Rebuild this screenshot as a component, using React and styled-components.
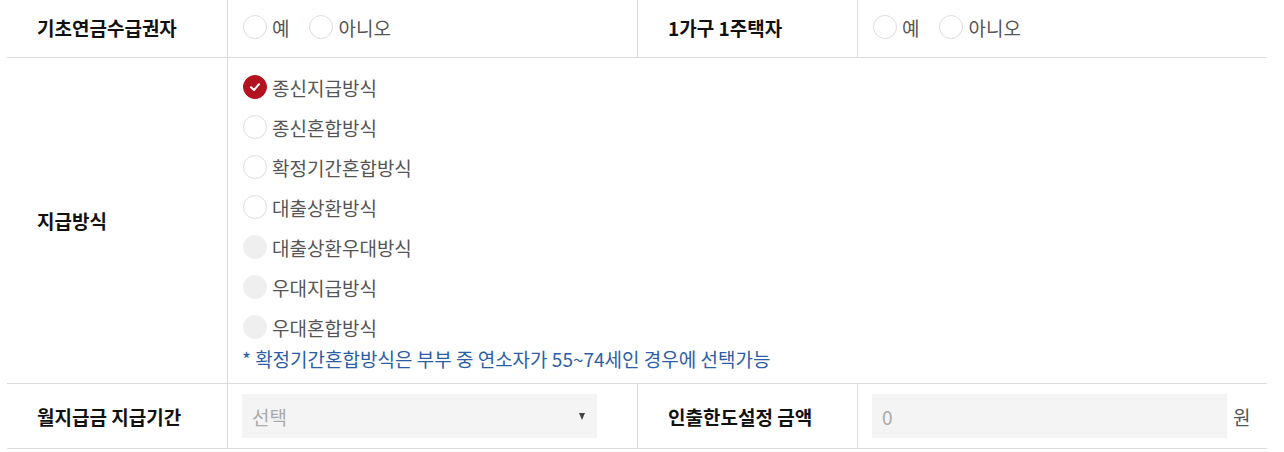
import React from "react";
import styled, { createGlobalStyle } from "styled-components";

const Global = createGlobalStyle`
  html, body { margin: 0; padding: 0; background: #fff; }
  body { font-family: "Noto Sans CJK KR", "Noto Sans", sans-serif; }
`;

const Table = styled.div`
  margin-left: 7px;
  width: 1260px;
  display: grid;
  grid-template-columns: 221px 410px 220px 409px;
`;

const Label = styled.div`
  display: flex;
  align-items: center;
  padding: 0 0 ${(p) => p.$pb || 0}px 30px;
  height: ${(p) => p.$h}px;
  border-right: 1px solid #dcdcdc;
  border-bottom: 1px solid #dcdcdc;
  font-size: 19px;
  font-weight: 700;
  color: #111;
  box-sizing: border-box;
`;

const Cell = styled.div`
  grid-column: ${(p) => p.$span || "auto"};
  display: flex;
  flex-direction: ${(p) => (p.$column ? "column" : "row")};
  align-items: ${(p) => (p.$column ? "flex-start" : "center")};
  padding: ${(p) => p.$pad || "0 14px"};
  height: ${(p) => p.$h}px;
  border-right: ${(p) => (p.$divider ? "1px solid #dcdcdc" : "none")};
  border-bottom: 1px solid #dcdcdc;
  box-sizing: border-box;
`;

const Option = styled.label`
  display: flex;
  align-items: center;
  height: 40px;
  margin-left: 1px;
  margin-right: ${(p) => p.$mr || 0}px;
  font-size: 19px;
  color: #555;
  cursor: pointer;
`;

const Circle = styled.span`
  width: 24px;
  height: 24px;
  box-sizing: border-box;
  border-radius: 50%;
  margin-right: 5px;
  display: flex;
  align-items: center;
  justify-content: center;
  flex-shrink: 0;
  background: ${(p) => (p.$checked ? "#b3121f" : p.$disabled ? "#efefef" : "#fff")};
  border: 1px solid ${(p) => (p.$checked ? "#b3121f" : p.$disabled ? "#efefef" : "#dcdcdc")};
`;

const Notice = styled.p`
  margin: 0;
  height: 24px;
  line-height: 24px;
  font-size: 19px;
  color: #2b5ea6;
`;

const Box = styled.div`
  width: 355px;
  height: 44px;
  box-sizing: border-box;
  background: #f4f4f4;
  display: flex;
  align-items: center;
  justify-content: space-between;
  padding: 0 12px 0 10px;
  font-size: 19px;
  color: #aaa;
`;

const Arrow = styled.span`
  width: 0;
  height: 0;
  border-left: 3.5px solid transparent;
  border-right: 3.5px solid transparent;
  border-top: 7px solid #444;
`;

const Unit = styled.span`
  margin-left: 6px;
  font-size: 19px;
  color: #555;
`;

function Radio({ children, checked, disabled, mr }) {
  return (
    <Option $mr={mr}>
      <Circle $checked={checked} $disabled={disabled}>
        {checked && (
          <svg width="14" height="14" viewBox="0 0 14 14">
            <path d="M3 7.2 L6 10 L11 4.2" fill="none" stroke="#fff" strokeWidth="2" strokeLinecap="round" strokeLinejoin="round" />
          </svg>
        )}
      </Circle>
      {children}
    </Option>
  );
}

const methods = [
  { t: "종신지급방식", checked: true },
  { t: "종신혼합방식" },
  { t: "확정기간혼합방식" },
  { t: "대출상환방식" },
  { t: "대출상환우대방식", disabled: true },
  { t: "우대지급방식", disabled: true },
  { t: "우대혼합방식", disabled: true },
];

export default function App() {
  return (
    <>
      <Global />
      <Table>
        <Label $h={58} $pb={3}>기초연금수급권자</Label>
        <Cell $h={58} $divider $pad="0 14px 3px">
          <Radio mr={19}>예</Radio>
          <Radio>아니오</Radio>
        </Cell>
        <Label $h={58} $pb={3}>1가구 1주택자</Label>
        <Cell $h={58} $pad="0 14px 3px">
          <Radio mr={19}>예</Radio>
          <Radio>아니오</Radio>
        </Cell>

        <Label $h={326}>지급방식</Label>
        <Cell $span="2 / 5" $h={326} $column $pad="9px 14px 0">
          {methods.map((m) => (
            <Radio key={m.t} checked={m.checked} disabled={m.disabled}>
              {m.t}
            </Radio>
          ))}
          <Notice>* 확정기간혼합방식은 부부 중 연소자가 55~74세인 경우에 선택가능</Notice>
        </Cell>

        <Label $h={65}>월지급금 지급기간</Label>
        <Cell $h={65} $divider>
          <Box>
            선택
            <Arrow />
          </Box>
        </Cell>
        <Label $h={65}>인출한도설정 금액</Label>
        <Cell $h={65}>
          <Box>0</Box>
          <Unit>원</Unit>
        </Cell>
      </Table>
    </>
  );
}
